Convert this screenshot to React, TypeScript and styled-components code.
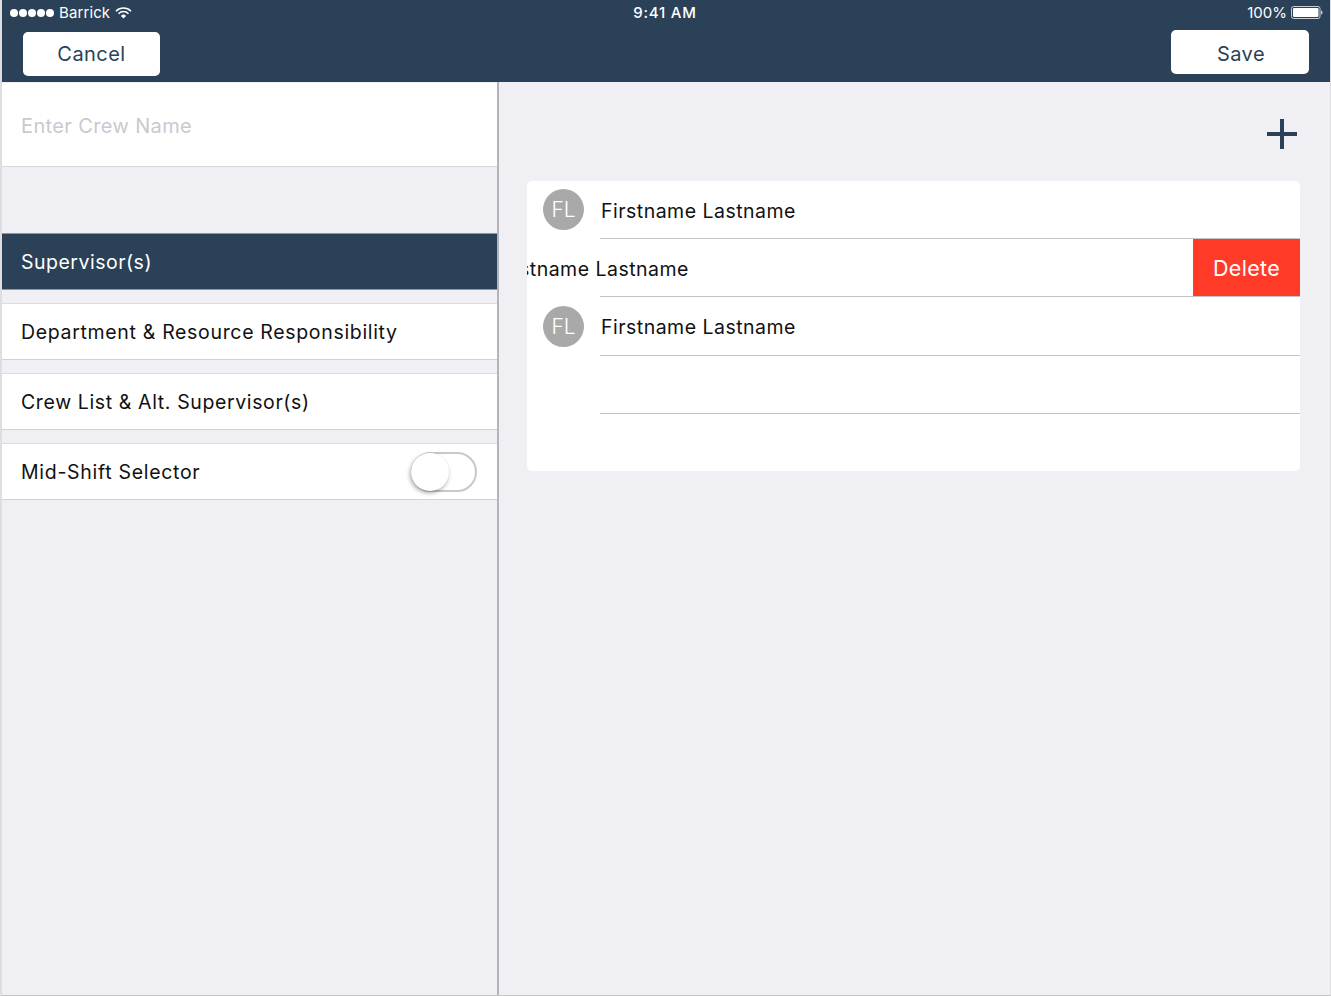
import React from "react";
import styled, { createGlobalStyle } from "styled-components";

const Global = createGlobalStyle`
  html, body { margin: 0; padding: 0; background: #efeff4; }
  * { box-sizing: border-box; }
  #root { font-family: Inter, "Liberation Sans", sans-serif; }
`;

const Screen = styled.div`
  width: 1331px;
  height: 996px;
  overflow: hidden;
  display: flex;
  flex-direction: column;
  background: #efeff4;
  border-left: 2px solid #dedee2;
  border-right: 1px solid #dedee2;
  border-bottom: 1px solid #c4c4c8;
`;

const Header = styled.header`
  height: 82px;
  flex: none;
  background: #2b4158;
  color: #fff;
  display: flex;
  flex-direction: column;
`;

const StatusBar = styled.div`
  height: 25px;
  display: grid;
  grid-template-columns: 1fr auto 1fr;
  align-items: center;
  padding: 0 7px 0 8px;
  font-size: 15px;
`;

const Carrier = styled.div`
  display: flex;
  align-items: center;
  gap: 5px;
  letter-spacing: 0.1px;
`;

const Dots = styled.div`
  display: flex;
  gap: 1px;
`;

const Dot = styled.span`
  width: 8px;
  height: 8px;
  border-radius: 50%;
  background: #fff;
`;

const Clock = styled.div`
  font-weight: 500;
  letter-spacing: 0.75px;
  margin-left: -3px;
`;

const BatteryWrap = styled.div`
  display: flex;
  align-items: center;
  justify-content: flex-end;
  gap: 4px;
`;

const Actions = styled.div`
  display: flex;
  justify-content: space-between;
  padding: 5px 21px 0 21px;
`;

const NavButton = styled.button<{ $save?: boolean }>`
  width: ${(p) => (p.$save ? "138px" : "137px")};
  height: 44px;
  margin-top: ${(p) => (p.$save ? "0" : "2px")};
  background: #fff;
  border: none;
  border-radius: 5px;
  color: #2b4158;
  font: 400 20px Inter, "Liberation Sans", sans-serif;
  letter-spacing: 0.45px;
  padding: ${(p) => (p.$save ? "4px 0 0 2px" : "0")};
`;

const Body = styled.div`
  flex: 1;
  display: flex;
  min-height: 0;
`;

const Left = styled.aside`
  width: 497px;
  flex: none;
  border-right: 2px solid #b4b4ba;
  padding-top: 1px;
`;

const NameField = styled.div`
  height: 84px;
  background: #fff;
  border-bottom: 1px solid #d8d8dc;
  color: #c9c9ce;
  font-size: 20px;
  letter-spacing: 0.37px;
  display: flex;
  align-items: center;
  padding-left: 19px;
  padding-top: 2px;
`;

const Menu = styled.div`
  margin-top: 66px;
  display: flex;
  flex-direction: column;
  gap: 13px;
`;

const MenuRow = styled.div<{ $active?: boolean; $track: number }>`
  height: 57px;
  display: flex;
  align-items: center;
  justify-content: space-between;
  padding: 1px 20px 0 19px;
  font-size: 19.5px;
  letter-spacing: ${(p) => p.$track}px;
  background: ${(p) => (p.$active ? "#2b4158" : "#fff")};
  color: ${(p) => (p.$active ? "#fff" : "#111")};
  border-top: 1px solid ${(p) => (p.$active ? "#8a97a6" : "#dcdce0")};
  border-bottom: 1px solid ${(p) => (p.$active ? "#8a97a6" : "#d2d2d6")};
`;

const Toggle = styled.div`
  position: relative;
  width: 66px;
  height: 40px;
  border: 2px solid #c8c8cc;
  border-radius: 20px;
  background: #fff;
`;

const Knob = styled.span`
  position: absolute;
  left: -2px;
  top: -1px;
  width: 38px;
  height: 38px;
  border-radius: 50%;
  background: #fff;
  box-shadow: -1px 2px 4px rgba(0, 0, 0, 0.35);
`;

const Right = styled.main`
  flex: 1;
  padding: 0 30px 0 28px;
  display: flex;
  flex-direction: column;
`;

const PlusBar = styled.div`
  height: 99px;
  flex: none;
  display: flex;
  justify-content: flex-end;
  padding-top: 37px;
  padding-right: 3px;
`;

const Card = styled.section`
  height: 290px;
  background: #fff;
  border-radius: 5px;
  overflow: hidden;
  display: flex;
  flex-direction: column;
`;

const Row = styled.div<{ $tall?: boolean }>`
  height: ${(p) => (p.$tall ? "59px" : "58px")};
  flex: none;
  display: flex;
  align-items: center;
  position: relative;
  overflow: hidden;
  font-size: 19.5px;
  letter-spacing: 0.48px;
  color: #111;
`;

const Divider = styled.div`
  position: absolute;
  left: 73px;
  right: 0;
  bottom: 0;
  height: 1px;
  background: #c4c4c8;
`;

const Avatar = styled.div`
  width: 41px;
  height: 41px;
  flex: none;
  margin: -1px 0 0 16px;
  border-radius: 50%;
  background: #a9a9a9;
  color: #fff;
  font-size: 21px;
  font-weight: 300;
  display: flex;
  align-items: center;
  justify-content: center;
  letter-spacing: 0;
`;

const Name = styled.span<{ $lift?: boolean }>`
  margin-left: 17px;
  padding-top: ${(p) => (p.$lift ? "0" : "2px")};
`;

const SwipedName = styled.span`
  margin-left: -33px;
  padding-top: 2px;
  flex: 1;
  white-space: nowrap;
`;

const DeleteAction = styled.div`
  width: 107px;
  height: 58px;
  flex: none;
  background: #ff3b27;
  color: #fff;
  font-size: 21.5px;
  letter-spacing: 0.3px;
  display: flex;
  align-items: center;
  justify-content: center;
  border-bottom: 1px solid #c4c4c8;
  position: relative;
  z-index: 1;
`;

export default function App() {
  return (
    <Screen>
      <Global />
      <Header>
        <StatusBar>
          <Carrier>
            <Dots>
              {[0, 1, 2, 3, 4].map((i) => (
                <Dot key={i} />
              ))}
            </Dots>
            <span>Barrick</span>
            <svg width="17" height="12" viewBox="0 0 17 12" fill="none">
              <path d="M1 4.2a10.6 10.6 0 0 1 15 0" stroke="#fff" strokeWidth="1.5" />
              <path d="M3.5 6.7a7 7 0 0 1 10 0" stroke="#fff" strokeWidth="1.5" />
              <path d="M8.5 11.5 5.9 8.9a3.7 3.7 0 0 1 5.2 0z" fill="#fff" />
            </svg>
          </Carrier>
          <Clock>9:41 AM</Clock>
          <BatteryWrap>
            <span>100%</span>
            <svg width="32" height="13" viewBox="0 0 32 13" fill="none">
              <rect x="0.5" y="0.5" width="28.5" height="12" rx="2" stroke="#c8ced6" />
              <rect x="2" y="2" width="25.5" height="9" rx="1" fill="#fff" />
              <path d="M30 4.5c1 .2 1.5 1 1.5 2s-.5 1.8-1.5 2z" fill="#c8ced6" />
            </svg>
          </BatteryWrap>
        </StatusBar>
        <Actions>
          <NavButton>Cancel</NavButton>
          <NavButton $save>Save</NavButton>
        </Actions>
      </Header>
      <Body>
        <Left>
          <NameField>Enter Crew Name</NameField>
          <Menu>
            <MenuRow $active $track={0.5}>Supervisor(s)</MenuRow>
            <MenuRow $track={0.67}>Department &amp; Resource Responsibility</MenuRow>
            <MenuRow $track={0.62}>Crew List &amp; Alt. Supervisor(s)</MenuRow>
            <MenuRow $track={0.7}>
              Mid-Shift Selector
              <Toggle>
                <Knob />
              </Toggle>
            </MenuRow>
          </Menu>
        </Left>
        <Right>
          <PlusBar>
            <svg width="30" height="30" viewBox="0 0 30 30">
              <path d="M15 0v30M0 15h30" stroke="#2b4158" strokeWidth="4" fill="none" />
            </svg>
          </PlusBar>
          <Card>
            <Row>
              <Avatar>FL</Avatar>
              <Name>Firstname Lastname</Name>
              <Divider />
            </Row>
            <Row>
              <SwipedName>Firstname Lastname</SwipedName>
              <DeleteAction>Delete</DeleteAction>
              <Divider />
            </Row>
            <Row $tall>
              <Avatar>FL</Avatar>
              <Name $lift>Firstname Lastname</Name>
              <Divider />
            </Row>
            <Row>
              <Divider />
            </Row>
          </Card>
        </Right>
      </Body>
    </Screen>
  );
}
